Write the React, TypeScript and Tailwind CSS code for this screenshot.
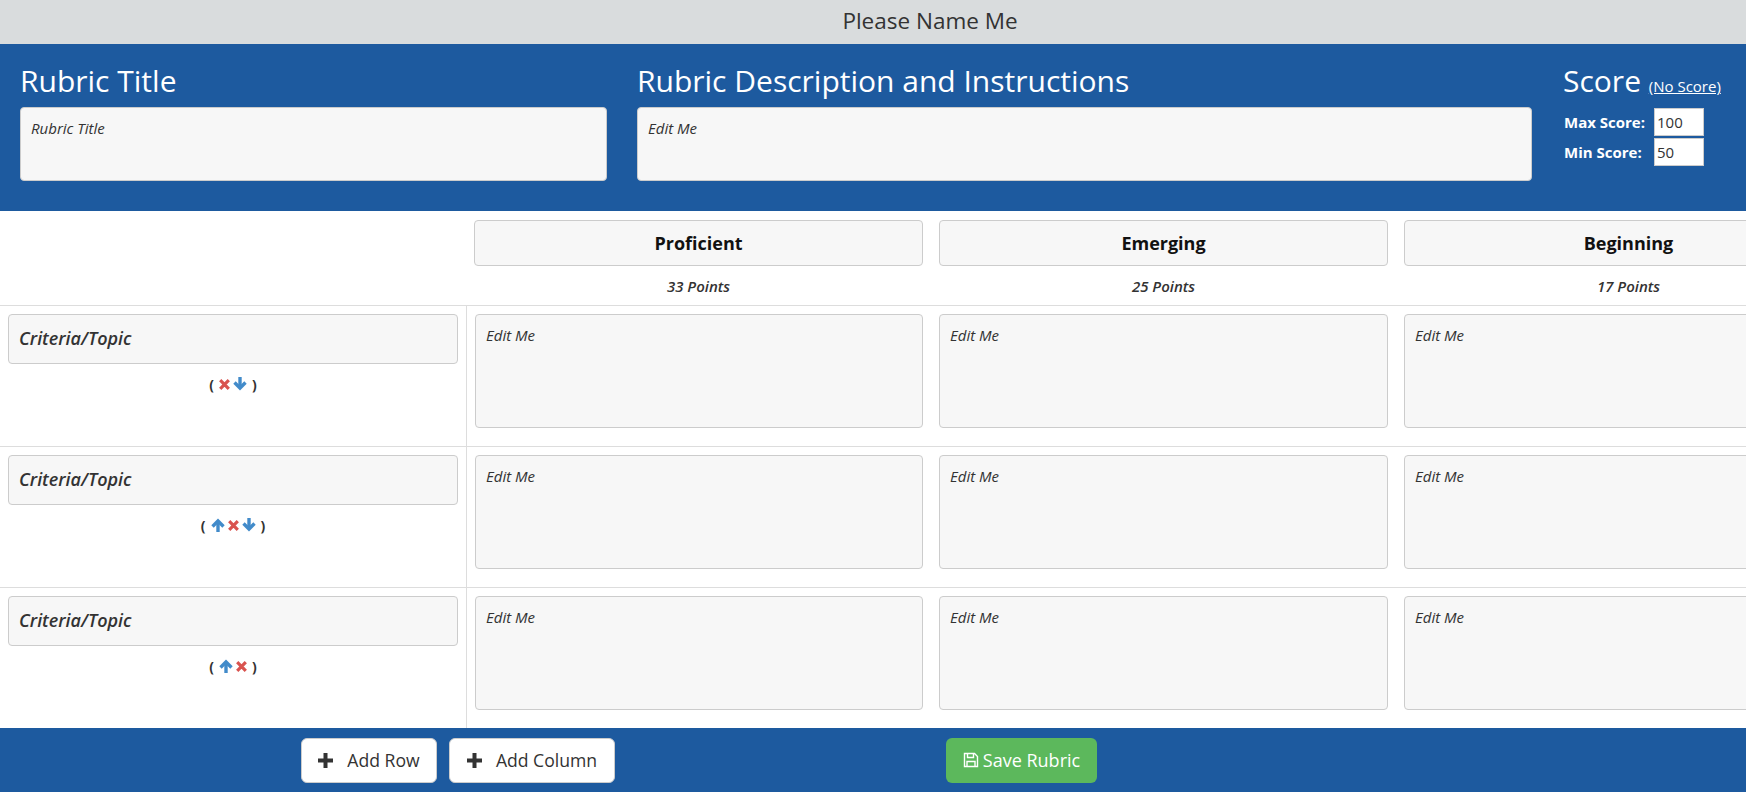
const columns = [
  { name: "Proficient", points: "33 Points" },
  { name: "Emerging", points: "25 Points" },
  { name: "Beginning", points: "17 Points" },
];

function ArrowIcon({ dir }: { dir: "up" | "down" }) {
  return (
    <svg
      viewBox="0 0 14 14"
      className={`h-[14px] w-[14px] text-[#428bca] ${dir === "down" ? "rotate-180" : ""}`}
      fill="none"
      stroke="currentColor"
      strokeWidth="3.4"
    >
      <path d="M7 14V3" />
      <path d="M1.5 8.5L7 3l5.5 5.5" />
    </svg>
  );
}

function CrossIcon() {
  return (
    <svg viewBox="0 0 11 11" className="h-[11px] w-[11px] text-[#d9534f]" fill="none" stroke="currentColor" strokeWidth="3.2">
      <path d="M1.2 1.2l8.6 8.6M9.8 1.2l-8.6 8.6" />
    </svg>
  );
}

function PlusIcon() {
  return (
    <svg viewBox="0 0 15 15" className="h-[15px] w-[15px] text-[#333]" fill="currentColor">
      <path d="M5.5 0h4v5.5H15v4H9.5V15h-4V9.5H0v-4h5.5z" />
    </svg>
  );
}

function SaveIcon() {
  return (
    <svg viewBox="0 0 16 16" className="h-4 w-4 text-white" fill="none" stroke="currentColor" strokeWidth="1.4">
      <path d="M1.5 1.5h10l3 3v10h-13z" />
      <path d="M4.5 1.5v4h6v-4M4 14.5v-5h8v5" />
    </svg>
  );
}

function Actions({ up, down }: { up?: boolean; down?: boolean }) {
  return (
    <div className="mt-[10px] flex h-5 items-center justify-center gap-[3px] text-[14px] font-bold text-[#333]">
      <span className="mr-[2px]">(</span>
      {up && <ArrowIcon dir="up" />}
      <CrossIcon />
      {down && <ArrowIcon dir="down" />}
      <span className="ml-[2px]">)</span>
    </div>
  );
}

function Row({ up, down }: { up?: boolean; down?: boolean }) {
  return (
    <div className="flex h-[141px] border-t border-[#ddd]">
      <div className="w-[467px] shrink-0 border-r border-[#ddd] pt-2 pr-2 pl-2">
        <div className="flex h-[50px] w-[450px] items-center rounded border border-[#ccc] bg-[#f7f7f7] px-[10px] pb-[3px] text-lg font-semibold text-[#333] italic">
          Criteria/Topic
        </div>
        <Actions up={up} down={down} />
      </div>
      <div className="flex gap-4 pt-2 pl-2">
        {columns.map((c) => (
          <div
            key={c.name}
            className="h-[114px] w-[449px] shrink-0 rounded border border-[#ccc] bg-[#f7f7f7] px-[10px] pt-[10px] text-[15px] leading-5 text-[#333] italic first:w-[448px]"
          >
            Edit Me
          </div>
        ))}
      </div>
    </div>
  );
}

function ScoreInput({ label, value }: { label: string; value: string }) {
  return (
    <div className="flex h-7 items-center">
      <span className="w-[91px] pl-px text-[15px] font-bold text-white">{label}</span>
      <input
        readOnly
        value={value}
        className="h-7 w-[50px] border border-[#ccc] bg-white px-[2px] text-[15px] text-[#333]"
      />
    </div>
  );
}

export default function App() {
  return (
    <div className="flex h-[792px] w-[1746px] flex-col overflow-hidden bg-white font-['Open_Sans',sans-serif] text-[#333]">
      <div className="flex h-11 items-center justify-center bg-[#d9dcdd] pb-[2px] pl-[114px] text-[22.5px] text-[#333]">
        Please Name Me
      </div>

      <div className="flex h-[167px] gap-[30px] bg-[#1d5a9f] pl-5">
        <div className="w-[587px]">
          <h2 className="mt-[13px] h-[50px] text-[30px] leading-[48px] text-white">Rubric Title</h2>
          <div className="h-[74px] rounded border border-[#ccc] bg-[#f7f7f7] px-[10px] pt-[10px] text-[15px] leading-5 italic">
            Rubric Title
          </div>
        </div>
        <div className="w-[895px]">
          <h2 className="mt-[13px] h-[50px] text-[30px] leading-[48px] text-white">
            Rubric Description and Instructions
          </h2>
          <div className="h-[74px] rounded border border-[#ccc] bg-[#f7f7f7] px-[10px] pt-[10px] text-[15px] leading-5 italic">
            Edit Me
          </div>
        </div>
        <div className="ml-px">
          <h2 className="mt-[13px] h-[50px] text-[30px] leading-[48px] text-white">
            Score{" "}
            <a href="#" className="text-[15px] text-white underline">
              (No Score)
            </a>
          </h2>
          <div className="mt-px flex flex-col gap-[2px]">
            <ScoreInput label="Max Score:" value="100" />
            <ScoreInput label="Min Score:" value="50" />
          </div>
        </div>
      </div>

      <div className="flex h-[94px] gap-4 pt-[9px] pl-[474px]">
        {columns.map((c) => (
          <div key={c.name} className="w-[449px] shrink-0">
            <div className="flex h-[46px] items-center justify-center rounded border border-[#ccc] bg-[#f7f7f7] text-lg font-bold text-[#111]">
              {c.name}
            </div>
            <div className="mt-[9px] text-center text-[15px] font-semibold italic">{c.points}</div>
          </div>
        ))}
      </div>

      <Row down />
      <Row up down />
      <Row up />

      <div className="flex h-16 items-center bg-[#1d5a9f] pl-[301px]">
        <button className="flex h-[45px] w-[136px] items-center justify-center gap-[14px] rounded-md border border-[#ccc] bg-white text-[17.6px] text-[#333]">
          <PlusIcon /> Add Row
        </button>
        <button className="ml-3 flex h-[45px] w-[166px] items-center justify-center gap-[14px] rounded-md border border-[#ccc] bg-white text-[17.6px] text-[#333]">
          <PlusIcon /> Add Column
        </button>
        <button className="ml-[331px] flex h-[45px] w-[151px] items-center justify-center gap-[4px] rounded-md bg-[#5cb85c] text-lg text-white">
          <SaveIcon /> Save Rubric
        </button>
      </div>
    </div>
  );
}
